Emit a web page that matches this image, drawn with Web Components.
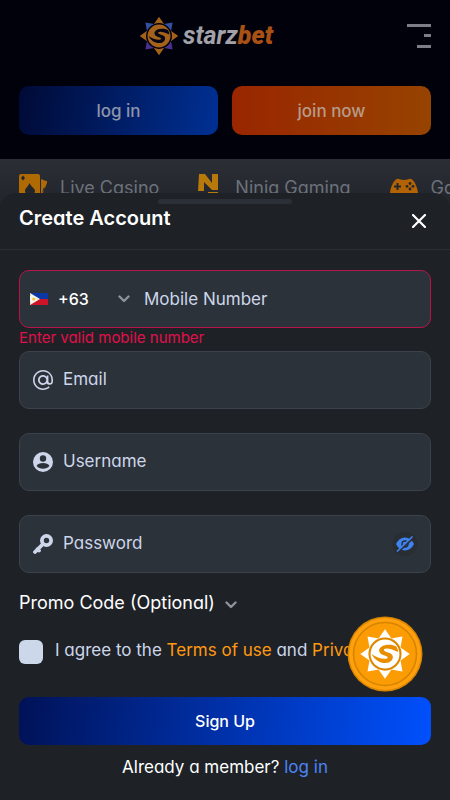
<!DOCTYPE html>
<html lang="en">
<head>
<meta charset="utf-8">
<meta name="viewport" content="width=device-width, initial-scale=1">
<title>starzbet – Create Account</title>
<style>
  html, body { margin: 0; min-height: 100%; background: #1e2227; }
  body {
    font-family: Inter, Lato, "Liberation Sans", sans-serif;
    font-feature-settings: "cv11", "ss03";
    font-size: 17px; line-height: 24px; color: #fff;
  }
</style>
</head>
<body>
<sb-app></sb-app>

<script>
const reset = `*, *::before, *::after { box-sizing: border-box; }
  button, input, select { font: inherit; font-feature-settings: inherit; color: inherit; margin: 0; }
  button { cursor: pointer; border: 0; background: none; padding: 0; }
  a { text-decoration: none; color: inherit; }
  svg { display: block; flex: none; }`;

function define(name, html, setup) {
  customElements.define(name, class extends HTMLElement {
    constructor() {
      super();
      this.attachShadow({ mode: 'open' });
    }
    connectedCallback() {
      if (this.shadowRoot.childNodes.length) return;
      const t = document.createElement('template');
      t.innerHTML = `<style>${reset}</style>` + (typeof html === 'function' ? html(this) : html);
      this.shadowRoot.append(t.content.cloneNode(true));
      if (setup) setup(this, this.shadowRoot);
    }
  });
}

const sPath = 'M12 -8 C6 -11 -4 -10 -6 -5 C-7 -1 -3 1 1 2 C4 3 3 5 0 5 C-5 5 -10 3 -14 0 C-11 7 -3 11 4 9 C9 7 10 1 5 -1 C2 -2 -2 -3 -1 -5 C1 -7 8 -5 14 -2 C14 -4 13 -6 12 -8 Z';

define('sb-sun', el => {
  const coin = el.hasAttribute('coin');
  const rays = [0, 45, 90, 135, 180, 225, 270, 315].map(a => {
    const fill = coin ? '#fff' : (a % 90 ? (a === 45 || a === 315 ? '#3450a0' : '#49308c') : '#a5611a');
    return `<path transform="rotate(${a})" fill="${fill}" d="M0 -26 L7 -16 Q0 -19 -7 -16 Z"/>`;
  }).join('');
  return coin ? `<style>:host { display: block; width: 76px; height: 76px; } svg { width: 100%; height: 100%; }</style>
  <svg viewBox="-38 -38 76 76" aria-hidden="true">
    <circle r="37.5" fill="#d98500"/><circle r="36" fill="#ffa00c"/>
    <circle r="31.5" fill="#fb9c05" stroke="#d78400" stroke-width="1.6"/>
    <g transform="scale(.95)">${rays}<circle r="17" fill="#d98605"/><circle r="15.2" fill="#fff"/>
    <path d="${sPath}" fill="#e98e00"/></g>
  </svg>` : `<style>:host { display: block; width: 40px; height: 40px; } svg { width: 100%; height: 100%; }</style>
  <svg viewBox="-27 -27 54 54" aria-hidden="true">${rays}
    <circle r="16.5" fill="#02020e"/><circle r="15.5" fill="#a5621b"/>
    <path d="${sPath}" fill="#060615"/>
  </svg>`;
});

define('sb-button', el => `<style>
    :host { display: block; }
    button { width: 100%; height: 48px; border-radius: 10px; font-weight: 500; text-align: center;
      background: var(--fill); color: var(--ink, #fff); }
    :host([tall]) button { height: 49px; }
  </style><button type="button"><slot></slot></button>`);

define('sb-header', `<style>
    :host { display: block; background: #01010c; padding: 14px 19px 24px; }
    .bar { display: grid; grid-template-columns: 1fr auto 1fr; align-items: center; height: 44px; }
    .logo { grid-column: 2; display: flex; align-items: center; gap: 4px; margin-right: 38px;
      font: italic 700 25px/40px Roboto, "Open Sans", sans-serif; color: #a2a2a8; }
    .logo b { color: #a95114; }
    .menu { justify-self: end; }
    .actions { display: grid; grid-template-columns: 1fr 1fr; gap: 14px; margin-top: 28px; }
    .in { --fill: linear-gradient(100deg, #000a36, #003094); --ink: #8e94ab; }
    .join { --fill: linear-gradient(90deg, #992600, #964300); --ink: #b79b88; }
  </style>
  <div class="bar">
    <a class="logo" href="#" aria-label="starzbet"><sb-sun></sb-sun><span>starz<b>bet</b></span></a>
    <button class="menu" type="button" aria-label="Menu">
      <svg width="24" height="24" fill="#7d7d87"><path d="M0 0h24v3H0zM17 10h7v3h-7zM10 21h14v3H10z"/></svg>
    </button>
  </div>
  <div class="actions">
    <sb-button tall class="in">log in</sb-button>
    <sb-button tall class="join">join now</sb-button>
  </div>`);

define('sb-category', `<style>
    :host { display: block; flex: none; }
    a { display: flex; align-items: center; gap: 13px; height: 28px; }
    ::slotted(svg) { display: block; flex: none; }
  </style><a href="#"><slot name="icon"></slot><slot></slot></a>`);

define('sb-categories', `<style>
    :host { display: block; background: linear-gradient(#2b2e34, #24272d 34px, #1e2227); color: #6c717b; }
    nav { display: flex; gap: 39px; padding: 15px 19px; height: 64px; overflow: hidden; font-size: 18px; }
  </style>
  <nav aria-label="Games">
    <sb-category><svg slot="icon" width="28" height="28" viewBox="0 0 28 28"><path fill="#b06a04" d="M2 0h17a2 2 0 0 1 2 2v24H0V2a2 2 0 0 1 2-2zM22 5l5 2a1 1 0 0 1 1 2l-6 15z"/><path fill="#22262c" d="M10.500 9C9 13 6 14 6 17c0 3 3 3.500 4 2l-1 4h4l-1-4c1 1.500 4 1 4-2 0-3-4-4-5.500-8zM4 1.500l2 2.500-2 2.500L2 4zM25 13l1 2-3 4z"/></svg>Live Casino</sb-category>
    <sb-category><svg slot="icon" width="24" height="28" viewBox="3 0 24 28"><path fill="#b8780a" d="M4 0h6l7 9V0h6v16h-6L9 8v9H3zM13 18h10v2H13z"/></svg>Ninja Gaming</sb-category>
    <sb-category><svg slot="icon" width="28" height="28" viewBox="0 0 28 28"><path fill="#b36204" d="M7 5c2-1 3 1 7 1s5-2 7-1c4 1 8 12 7 18-1 3-4 2-6-3H6c-2 5-5 6-6 3C-1 17 3 6 7 5z"/><path fill="#24272d" d="M6.500 9h2v2.500H11v2H8.500V16h-2v-2.500H4v-2h2.500z"/><g fill="#24272d"><circle cx="20" cy="9.500" r="1.400"/><circle cx="20" cy="15" r="1.400"/><circle cx="17" cy="12.300" r="1.400"/><circle cx="23" cy="12.300" r="1.400"/></g></svg>Games</sb-category>
  </nav>`);

let uid = 0;
define('sb-field', el => {
  const id = 'f' + (++uid);
  return `<style>
    :host { display: block; color: #cdd6ea; }
    .box { display: flex; align-items: center; height: 58px; padding: 0 11px 0 13px; border: 1px solid #3c424b;
      border-radius: 10px; background: #2c3239; }
    :host([invalid]) .box { border-color: #b71549; padding-left: 10px; }
    .edit { display: grid; flex: 1; min-width: 0; align-items: center; margin-left: 10px; }
    :host([invalid]) .edit { margin-left: 0; }
    label, input { grid-area: 1 / 1; }
    label { pointer-events: none; z-index: 1; padding-bottom: 2px; }
    :host([invalid]) label { padding: 0; }
    input { width: 100%; height: 56px; border: 0; background: none; outline: none; padding: 0; color: #fff; }
    .edit:has(input:not(:placeholder-shown)) label { visibility: hidden; }
    ::slotted(svg) { display: block; flex: none; }
    .error { display: none; height: 23px; margin: 0; font-size: 15px; line-height: 20px; color: #e20f4b; }
    :host([invalid]) .error { display: block; }
  </style>
  <div class="box"><slot name="lead"></slot>
    <div class="edit"><label for="${id}">${el.getAttribute('label')}</label>
    <input id="${id}" type="${el.getAttribute('type') || 'text'}" placeholder=" "></div>
    <slot name="trail"></slot></div>
  <p class="error"><slot name="error"></slot></p>`;
});

const chevron = `<svg class="chev" width="12" height="8" viewBox="0 0 12 8" fill="none" stroke="#8d929c" stroke-width="2.400" stroke-linecap="round" stroke-linejoin="round" aria-hidden="true"><path d="M1.500 1.500 6 6l4.500-4.500"/></svg>`;

define('sb-country', `<style>
    :host { display: block; color: #fff; font-weight: 500; }
    .wrap { display: flex; align-items: center; width: 114px; padding-right: 14px; }
    select { flex: 1; min-width: 0; margin-left: 10px; appearance: none; border: 0; background: none; padding: 0; outline: none;
      height: 24px; font-size: 16px; font-weight: 500; }
    option { color: #000; }
    .chev { pointer-events: none; }
  </style>
  <div class="wrap">
    <svg width="18" height="12" viewBox="0 0 18 12" aria-hidden="true"><path fill="#0a38a7" d="M0 0h18v6H0z"/><path fill="#ce1428" d="M0 6h18v6H0z"/><path fill="#f4f4f2" d="M0 0l10 6-10 6z"/><circle cx="3.800" cy="6" r="1.600" fill="#f2c830"/><path fill="#f2c830" d="M0 1l1 1-1 1zM0 9l1 1-1 1zM7 6l1-.6v1.200z"/></svg>
    <select aria-label="Country code"><option>+63</option></select>
    ${chevron}
  </div>`);

define('sb-signup', `<style>
    :host { display: block; background: #1e2227; border-radius: 16px 16px 0 0; }
    .grip { width: 134px; height: 5px; border-radius: 3px; background: #2b2f37; margin: 0 auto; }
    header { padding: 6px 19px 0; border-bottom: 1px solid #2b2f38; }
    .title { display: flex; justify-content: space-between; align-items: center; height: 45px; padding-bottom: 17px; }
    h1 { margin: 0; font-size: 20px; line-height: 28px; font-weight: 600; }
    .close { padding: 6px 5px 0; }
    form { padding: 20px 19px 21px; }
    .fields { display: grid; gap: 24px; }
    .first { margin-bottom: -24px; }
    .promo { display: flex; align-items: center; gap: 10px; margin-top: 18px; height: 24px; font-size: 18px; }
    .promo svg { margin-top: 4px; }
    .agree { display: flex; gap: 12px; margin-top: 23px; color: #cdd6ea; white-space: nowrap; }
    .agree input { appearance: none; flex: none; width: 24px; height: 24px; border-radius: 6px; background: #cdd7ea; margin-top: 2px; }
    .agree input:checked { background: #0050ff; }
    .agree a { color: #ff990f; }
    .go { margin-top: 33px; font-size: 16px; --fill: linear-gradient(97deg, #001257, #0050fd); }
    .member { text-align: center; margin: 10px 0 0; }
    .member a { color: #4c84f5; }
    .eye { display: grid; place-items: center; width: 28px; height: 28px; border-radius: 50%; background: #292e35; border: 1px solid #2f353c; }
  </style>
  <header>
    <div class="grip"></div>
    <div class="title"><h1>Create Account</h1>
      <button class="close" type="button" aria-label="Close"><svg width="14" height="14" viewBox="0 0 14 14" stroke="#fff" stroke-width="2.200" stroke-linecap="round"><path d="M1 1l12 12M13 1L1 13"/></svg></button></div>
  </header>
  <form>
    <div class="fields">
      <sb-field class="first" invalid label="Mobile Number" type="tel"><sb-country slot="lead"></sb-country><span slot="error">Enter valid mobile number</span></sb-field>
      <sb-field label="Email" type="email"><svg slot="lead" width="20" height="20" viewBox="2 2 20 20" fill="#cdd6ea"><path d="M12 2C6.480 2 2 6.480 2 12s4.480 10 10 10c2.600 0 4.900-.9 6.700-2.500l-1-1.200C16.200 19.700 14.200 20.400 12 20.400c-4.640 0-8.400-3.760-8.400-8.400S7.360 3.600 12 3.600s8.400 3.560 8.400 8.200v1.630c0 .79-.71 1.570-1.500 1.570s-1.500-.78-1.500-1.570V7.500h-1.500v1.200A5 5 0 0 0 12 7c-2.760 0-5 2.240-5 5s2.240 5 5 5c1.380 0 2.640-.56 3.540-1.470.65.89 1.970 1.270 3.160 1.270 1.970 0 3.300-1.400 3.300-3.370V12c0-5.520-4.480-10-10-10zm0 13.300c-1.820 0-3.300-1.480-3.300-3.300s1.480-3.300 3.300-3.300 3.300 1.480 3.300 3.300-1.480 3.300-3.300 3.300z"/></svg></sb-field>
      <sb-field label="Username"><svg slot="lead" width="20" height="20" viewBox="0 0 20 20"><circle cx="10" cy="10" r="10" fill="#cdd6ea"/><circle cx="10" cy="6.500" r="3.200" fill="#2c3239"/><path fill="#2c3239" d="M3.600 14c1-2.200 3.400-2.900 6.400-2.900s5.400.7 6.400 2.900c-1.500 1.800-3.800 2.700-6.400 2.700S5.100 15.800 3.600 14z"/></svg></sb-field>
      <sb-field label="Password" type="password"><svg slot="lead" width="20" height="20" viewBox="0 0 20 20"><circle cx="13.500" cy="6.500" r="4.600" fill="none" stroke="#cdd6ea" stroke-width="3.800"/><path d="M9.500 10.500L2 18M4.500 15l1.500 1.500" fill="none" stroke="#cdd6ea" stroke-width="3.800" stroke-linecap="round"/></svg>
        <button slot="trail" class="eye" type="button" aria-label="Show password"><svg width="20" height="16" viewBox="0 0 20 16"><path fill="#3f83f3" d="M1 8c2-4.300 5.200-6.500 9-6.500S17 3.700 19 8c-2 4.300-5.200 6.500-9 6.500S3 12.300 1 8z"/><circle cx="10" cy="8" r="3" fill="none" stroke="#292e35" stroke-width="1.400"/><path d="M3.500 15.500L18 2.200" stroke="#292e35" stroke-width="2"/><path d="M2.500 15L17 1" stroke="#3f83f3" stroke-width="1.700" stroke-linecap="round"/></svg></button></sb-field>
    </div>
    <button class="promo" type="button">Promo Code (Optional)${chevron}</button>
    <div class="agree"><input id="agree" type="checkbox"><label for="agree">I agree to the <a href="#">Terms of use</a> and <a href="#">Privacy</a></label></div>
    <sb-button class="go">Sign Up</sb-button>
    <p class="member">Already a member? <a href="#">log in</a></p>
  </form>`);

define('sb-app', `<style>
    :host { display: block; min-height: 100vh; }
    sb-signup { position: fixed; left: 0; right: 0; bottom: 0; z-index: 2; }
    .coin { position: fixed; right: 27px; bottom: 108px; z-index: 3; border-radius: 50%; }
  </style>
  <sb-header></sb-header>
  <sb-categories></sb-categories>
  <sb-signup></sb-signup>
  <button class="coin" type="button" aria-label="Rewards"><sb-sun coin></sb-sun></button>`);
</script>
</body>
</html>
